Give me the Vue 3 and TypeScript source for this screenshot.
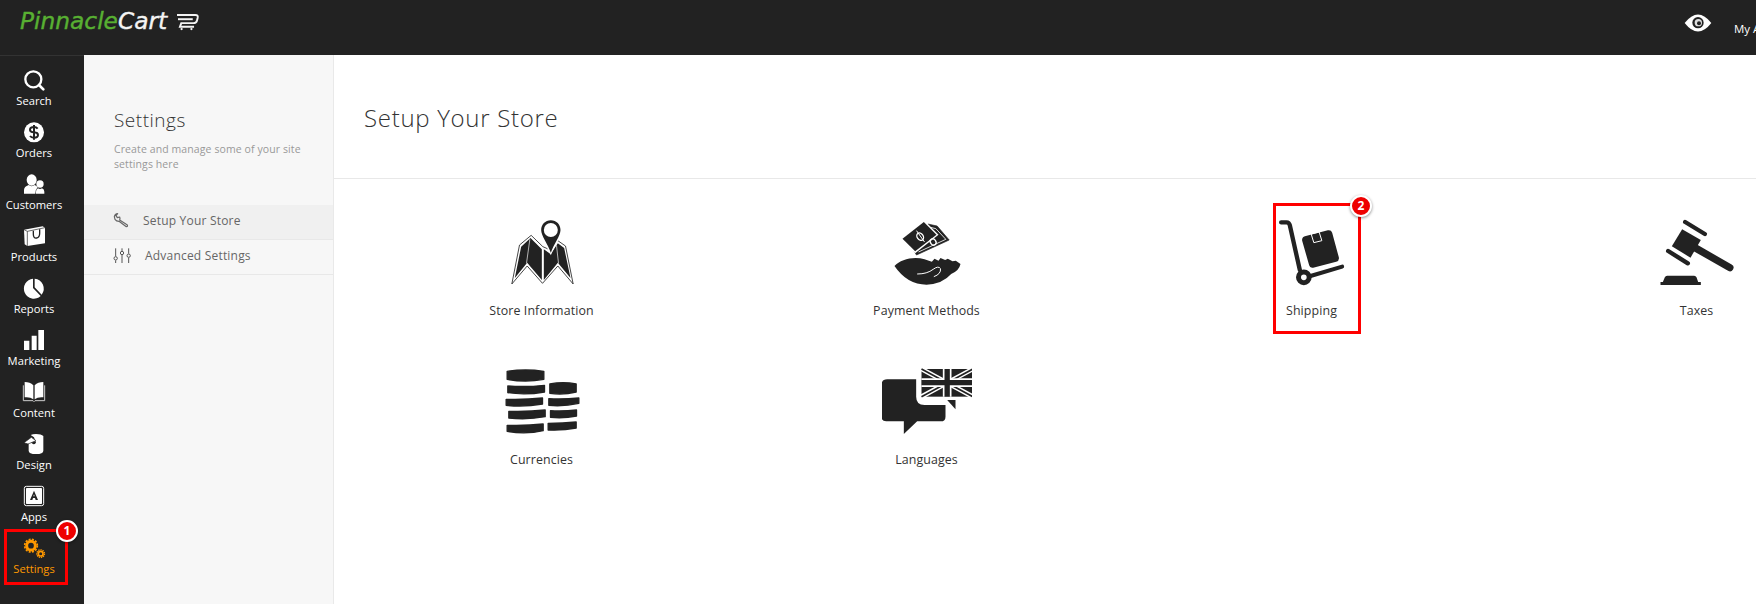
<script setup lang="ts">
const subtitle = 'Create and manage some of your site settings here'
</script>

<template>
  <div class="page">
    <header class="topbar">
      <div class="logo">
        <span class="logo-text"><span class="logo-green">Pinnacle</span>Cart</span>
        <svg class="logo-cart" viewBox="525 36 74 58">
          <g fill="none" stroke="#f4f4f4" stroke-width="6">
            <path d="M530 45H586Q595 45 593 54L591 62Q589 70 580 70H543L539 81H582" />
            <path d="M533 58H578" />
          </g>
          <circle cx="544" cy="88" r="3.5" fill="#f4f4f4" />
          <circle cx="574" cy="88" r="3.5" fill="#f4f4f4" />
        </svg>
      </div>
      <div class="account">
        <svg class="eye" viewBox="132 44 84 54">
          <path d="M134 71Q174 20 214 71Q174 122 134 71Z" fill="#fff" />
          <circle cx="174" cy="70" r="17" fill="#222" />
          <circle cx="175" cy="70" r="11" fill="#ddd" />
          <circle cx="177" cy="72" r="6" fill="#222" />
        </svg>
        <span class="account-name">My Account</span>
      </div>
    </header>

    <div class="body">
      <nav class="sidebar">
        <a class="nav-item">
          <svg viewBox="63 201 78 78">
            <circle cx="100" cy="238" r="24" fill="none" stroke="#fff" stroke-width="7" />
            <path d="M117 255L130 268" stroke="#fff" stroke-width="8" stroke-linecap="round" />
          </svg>
          <span>Search</span>
        </a>
        <a class="nav-item">
          <svg viewBox="63 357 78 78">
            <circle cx="102" cy="397" r="30" fill="#fff" />
            <path d="M113 386Q109 381 102 381Q90 381 90 389Q90 396 102 397Q114 398 114 405Q114 413 102 413Q94 413 90 408M102 375V419" fill="none" stroke="#222" stroke-width="6" />
          </svg>
          <span>Orders</span>
        </a>
        <a class="nav-item">
          <svg viewBox="63 513 78 78">
            <ellipse cx="95" cy="540" rx="15" ry="17" fill="#fff" />
            <path d="M72 581V570Q72 560 86 555Q95 562 104 555Q110 558 113 562Q105 570 106 581Z" fill="#fff" />
            <circle cx="120" cy="552" r="11" fill="#fff" />
            <path d="M108 581V575Q108 567 114 565Q120 569 126 565Q133 567 133 575V581Z" fill="#fff" />
          </svg>
          <span>Customers</span>
        </a>
        <a class="nav-item">
          <svg viewBox="63 669 78 78">
            <path d="M72 689L128 679L135 683V730L82 738L74 733Z" fill="#fff" />
            <path d="M72 689L82 694V738" fill="none" stroke="#222" stroke-width="2" />
            <path d="M82 694L135 683" fill="none" stroke="#222" stroke-width="2" />
            <path d="M100 692V703Q100 716 110 714Q119 713 119 700V688" fill="none" stroke="#222" stroke-width="4" />
          </svg>
          <span>Products</span>
        </a>
        <a class="nav-item">
          <svg viewBox="63 825 78 78">
            <path d="M99 836A30 30 0 1 0 122 888L99 864Z" fill="#fff" />
            <path d="M104 836A30 30 0 0 1 125 884L104 862Z" fill="#fff" />
          </svg>
          <span>Reports</span>
        </a>
        <a class="nav-item">
          <svg viewBox="63 81 78 78">
            <path d="M72 122H88V150H72ZM95 107H110V150H95ZM115 90H132V150H115Z" fill="#fff" />
          </svg>
          <span>Marketing</span>
        </a>
        <a class="nav-item">
          <svg viewBox="63 237 78 78">
            <path d="M74 246Q90 246 100 256V298Q90 290 74 292Z" fill="#fff" />
            <path d="M104 256Q114 246 130 246V292Q114 290 104 298Z" fill="#fff" />
            <path d="M70 256V302H99L102 305L105 302H134V256" fill="none" stroke="#ccc" stroke-width="3" />
          </svg>
          <span>Content</span>
        </a>
        <a class="nav-item">
          <svg viewBox="63 393 78 78">
            <path d="M86 424V452Q86 462 108 462Q130 462 130 452V408Q124 402 108 402Q98 402 92 405L102 412L108 428Q102 436 96 430Z" fill="#fff" />
            <path d="M72 428L94 412L108 422L84 432Z" fill="#fff" stroke="#222" stroke-width="2" />
          </svg>
          <span>Design</span>
        </a>
        <a class="nav-item">
          <svg viewBox="63 549 78 78">
            <rect x="73" y="559" width="58" height="58" rx="6" fill="#222" stroke="#fff" stroke-width="3" />
            <rect x="78" y="564" width="48" height="48" rx="2" fill="#fff" />
            <path d="M90 600L102 572L114 600H107L105 594H99L97 600ZM100 589H104L102 583Z" fill="#222" />
          </svg>
          <span>Apps</span>
        </a>
        <a class="nav-item active">
          <svg viewBox="63 705 78 78">
            <g fill="none" stroke="#f90">
              <circle cx="93" cy="737" r="13" stroke-width="9" />
              <circle cx="93" cy="737" r="19" stroke-width="5" stroke-dasharray="6 4" />
              <circle cx="122" cy="761" r="7" stroke-width="5" />
              <circle cx="122" cy="761" r="11.5" stroke-width="4" stroke-dasharray="4 2.5" />
            </g>
          </svg>
          <span>Settings</span>
          <i class="callout callout-nav"><b class="badge">1</b></i>
        </a>
      </nav>

      <aside class="panel">
        <div class="panel-head">
          <h2>Settings</h2>
          <p>{{ subtitle }}</p>
        </div>
        <a class="panel-link current">
          <svg viewBox="340 640 48 48" class="wrench">
            <path d="M344 654Q346 646 354 645L349 651L353 657L360 655Q362 660 360 664L382 678Q386 684 380 684L358 668Q350 668 346 662Z" fill="none" stroke="#666" stroke-width="3.5" stroke-linejoin="round" />
          </svg>
          <span>Setup Your Store</span>
        </a>
        <a class="panel-link">
          <svg viewBox="338 744 54 48" class="sliders">
            <g fill="none" stroke="#555" stroke-width="3">
              <path d="M346 748V772M346 784V792M365 748V756M365 768V792M385 748V764M385 776V792" />
              <circle cx="346" cy="778" r="5" />
              <circle cx="365" cy="762" r="5" />
              <circle cx="385" cy="770" r="5" />
            </g>
          </svg>
          <span>Advanced Settings</span>
        </a>
      </aside>

      <main class="main">
        <div class="main-head">
          <h1>Setup Your Store</h1>
        </div>
        <div class="grid">
          <a class="tile">
            <svg viewBox="79.5 54 270 210">
              <path d="M124 252L147 135L182 106L217 140L240 150L262 122L285 138L308 252L262 198L216 250L170 198Z" fill="#fff" stroke="#222" stroke-width="2.5" stroke-linejoin="round" />
              <path d="M133 234L152 140L180 114L214 148V240L170 188ZM220 148L240 162L262 130L281 144L300 234L262 188L220 240Z" fill="#222" />
              <path d="M178 118L168 190M258 136L264 190" stroke="#fff" stroke-width="2" />
              <path d="M241 57C222 57 208 72 208 90C208 110 230 140 241 166C252 140 274 110 274 90C274 72 260 57 241 57Z" fill="#fff" />
              <path d="M241 61C224 61 212 74 212 90C212 108 232 132 241 158C250 132 270 108 270 90C270 74 258 61 241 61Z" fill="#222" />
              <circle cx="241" cy="90" r="21" fill="#fff" />
            </svg>
            <span>Store Information</span>
          </a>
          <a class="tile">
            <svg viewBox="1234.5 54 270 210">
              <path d="M1272 198C1290 178 1330 168 1362 178L1384 185L1392 176L1404 182L1410 174L1424 180L1432 176L1446 184L1456 182L1470 192Q1466 212 1442 222Q1416 252 1368 254Q1310 254 1272 198Z" fill="#222" />
              <path d="M1340 222Q1370 222 1388 208Q1404 196 1410 206Q1412 222 1390 230" fill="none" stroke="#fff" stroke-width="3" />
              <path d="M1372 72L1400 78L1436 120L1338 165L1322 140Z" fill="#222" stroke="#222" stroke-width="2" stroke-linejoin="round" />
              <path d="M1380 82L1396 86L1426 118L1344 156" fill="none" stroke="#fff" stroke-width="2.5" />
              <path d="M1360 60L1290 116L1334 160L1404 104Z" fill="#fff" />
              <path d="M1360 66L1296 116L1334 154L1398 104Z" fill="#222" />
              <ellipse cx="1349" cy="110" rx="12" ry="9" transform="rotate(55 1349 110)" fill="none" stroke="#fff" stroke-width="4" />
              <path d="M1338 92L1362 126" stroke="#fff" stroke-width="3" />
              <ellipse cx="1388" cy="126" rx="10" ry="8" transform="rotate(55 1388 126)" fill="none" stroke="#fff" stroke-width="4" />
            </svg>
            <span>Payment Methods</span>
          </a>
          <a class="tile tile-marked">
            <svg viewBox="79.5 144 270 210">
              <path d="M122 157H138Q146 157 148 166L178 300" fill="none" stroke="#222" stroke-width="13" stroke-linecap="round" />
              <path d="M210 318L305 290" fill="none" stroke="#222" stroke-width="12" stroke-linecap="round" />
              <circle cx="190" cy="322" r="16" fill="none" stroke="#222" stroke-width="15" />
              <path d="M196 198L262 181Q272 179 275 188L295 262Q297 272 287 275L218 293Q208 295 206 286L185 212Q183 201 196 198Z" fill="#222" />
              <path d="M212 192L236 186L244 212L220 218Z" fill="none" stroke="#fff" stroke-width="3" />
            </svg>
            <span>Shipping</span>
            <i class="callout callout-tile"><b class="badge">2</b></i>
          </a>
          <a class="tile">
            <svg viewBox="1234.5 144 270 210">
              <path d="M1325 178L1381 210L1350 263L1294 229Z" fill="#222" />
              <path d="M1334 156L1393 192M1283 243L1342 280" stroke="#222" stroke-width="13" stroke-linecap="round" />
              <path d="M1365 234L1468 293" stroke="#222" stroke-width="22" stroke-linecap="round" />
              <path d="M1260 345V336H1267L1273 322Q1275 317 1280 317H1361Q1366 317 1368 322L1373 336H1381V345Z" fill="#222" />
            </svg>
            <span>Taxes</span>
          </a>
          <a class="tile">
            <svg viewBox="79.5 501 270 210">
              <g fill="#222" stroke="#222" stroke-width="4" stroke-linejoin="round">
                <path d="M110 514Q165 506 220 514V538Q165 548 110 538Z" />
                <path d="M112 558Q165 562 222 556V576Q165 586 112 578Z" />
                <path d="M107 598Q160 600 216 594V612Q160 622 107 616Z" />
                <path d="M115 634Q170 636 224 630V650Q170 660 115 654Z" />
                <path d="M110 676Q165 678 218 672V692Q165 704 110 694Z" />
                <path d="M238 552Q278 544 317 552V576Q278 586 238 580Z" />
                <path d="M235 596Q280 598 325 594V610Q280 620 235 616Z" />
                <path d="M240 632Q280 634 318 630V648Q280 656 240 652Z" />
                <path d="M233 670Q278 670 317 666V684Q278 692 233 690Z" />
              </g>
            </svg>
            <span>Currencies</span>
          </a>
          <a class="tile">
            <svg viewBox="1234.5 501 270 210">
              <path d="M1233 555Q1233 538 1250 538H1337V590Q1337 615 1362 615H1425V650Q1425 664 1411 664H1340L1300 702V664H1247Q1233 664 1233 650Z" fill="#222" />
              <path d="M1430 600H1455V628Z" fill="#222" />
              <rect x="1353" y="507" width="154" height="83" fill="#222" />
              <path d="M1353 507L1507 590M1507 507L1353 590" stroke="#fff" stroke-width="14" />
              <path d="M1353 507L1507 590M1507 507L1353 590" stroke="#222" stroke-width="5" />
              <path d="M1430 507V590M1353 548H1507" stroke="#fff" stroke-width="26" />
              <path d="M1430 507V590M1353 548H1507" stroke="#222" stroke-width="16" />
            </svg>
            <span>Languages</span>
          </a>
        </div>
      </main>
    </div>
  </div>
</template>

<style scoped>
.page {
  width: 1756px;
  height: 604px;
  display: flex;
  flex-direction: column;
  overflow: hidden;
  font-family: "Open Sans", "Noto Sans", sans-serif;
  background: #fff;
}

.topbar {
  height: 55px;
  flex: none;
  background: #222;
  display: flex;
  justify-content: space-between;
  position: relative;
}

.logo {
  display: flex;
  align-items: flex-start;
  padding: 9px 0 0 20px;
}

.logo-text {
  font-family: "DejaVu Sans", sans-serif;
  font-style: italic;
  font-size: 23.3px;
  line-height: 24px;
  color: #f4f4f4;
  -webkit-text-stroke: 0.4px currentColor;
}

.logo-green {
  color: #58b032;
}

.logo-cart {
  width: 25px;
  height: 19px;
  margin: 3px 0 0 8px;
}

.account {
  width: 116px;
  display: flex;
  align-items: flex-start;
  overflow: hidden;
  flex: none;
  white-space: nowrap;
}

.eye {
  width: 28px;
  height: 18px;
  margin: 14px 0 0 44px;
  flex: none;
}

.account-name {
  font-size: 11.5px;
  line-height: 16px;
  color: #fff;
  margin: 21px 0 0 22px;
}

.body {
  flex: 1;
  display: flex;
  min-height: 0;
}

.sidebar {
  width: 84px;
  flex: none;
  background: #222;
  padding: 11px 16px 0 0;
  border-top: 1px solid #333;
  box-sizing: border-box;
}

.nav-item {
  height: 52px;
  display: flex;
  flex-direction: column;
  align-items: center;
  color: #fff;
  font-size: 11.2px;
  line-height: 16px;
  position: relative;
}

.nav-item svg {
  width: 26px;
  height: 26px;
  flex: none;
}

.nav-item.active {
  color: #f90;
}

.callout {
  position: absolute;
  border: 3px solid #f00;
  box-sizing: border-box;
}

.callout-nav {
  left: 4px;
  top: -6px;
  width: 64px;
  height: 56px;
}

.callout-tile {
  left: 154px;
  top: 24px;
  width: 88px;
  height: 131px;
}

.badge {
  position: absolute;
  right: -14px;
  top: -11px;
  width: 18px;
  height: 18px;
  border: 2px solid #fff;
  border-radius: 50%;
  background: #ee0000;
  box-shadow: 0 1px 3px rgba(0, 0, 0, 0.45);
  color: #fff;
  font: 700 12px/18px "Open Sans", sans-serif;
  text-align: center;
}

.callout-nav .badge {
  right: -13px;
  top: -12px;
}

.panel {
  width: 250px;
  flex: none;
  background: #f7f7f7;
  border-right: 1px solid #e9e9e9;
  box-sizing: border-box;
}

.panel-head {
  height: 150px;
  padding: 53px 20px 0 30px;
  box-sizing: border-box;
}

.panel-head h2 {
  margin: 0;
  font-size: 19px;
  line-height: 24px;
  font-weight: 300;
  letter-spacing: 0.5px;
  color: #333;
}

.panel-head p {
  margin: 10px 0 0;
  font-size: 10.5px;
  line-height: 15px;
  letter-spacing: 0.1px;
  color: #999;
}

.panel-link {
  height: 35px;
  display: flex;
  align-items: center;
  border-bottom: 1px solid #e8e8e8;
  box-sizing: border-box;
  padding: 0 0 4px 29px;
  font-size: 12px;
  color: #666;
  letter-spacing: 0.2px;
}

.panel-link.current {
  background: #f0f0f0;
}

.wrench {
  width: 16px;
  height: 16px;
  margin-right: 14px;
}

.sliders {
  width: 18px;
  height: 16px;
  margin-right: 14px;
}

.main {
  flex: 1;
  min-width: 0;
  overflow: hidden;
}

.main-head {
  height: 124px;
  border-bottom: 1px solid #e8e8e8;
  box-sizing: border-box;
  padding: 46px 0 0 30px;
}

.main-head h1 {
  margin: 0;
  font-size: 24px;
  line-height: 34px;
  font-weight: 300;
  letter-spacing: 0.7px;
  color: #333;
}

.grid {
  display: grid;
  grid-template-columns: repeat(4, 385px);
  grid-auto-rows: 149px;
  padding-left: 15px;
}

.tile {
  display: flex;
  flex-direction: column;
  align-items: center;
  padding-top: 39px;
  font-size: 12.4px;
  line-height: 18px;
  color: #333;
  letter-spacing: 0.1px;
  position: relative;
  box-sizing: border-box;
}

.tile svg {
  width: 90px;
  height: 70px;
  margin-bottom: 14px;
  flex: none;
}
</style>

<style>
html,
body {
  margin: 0;
  overflow: hidden;
}
</style>
